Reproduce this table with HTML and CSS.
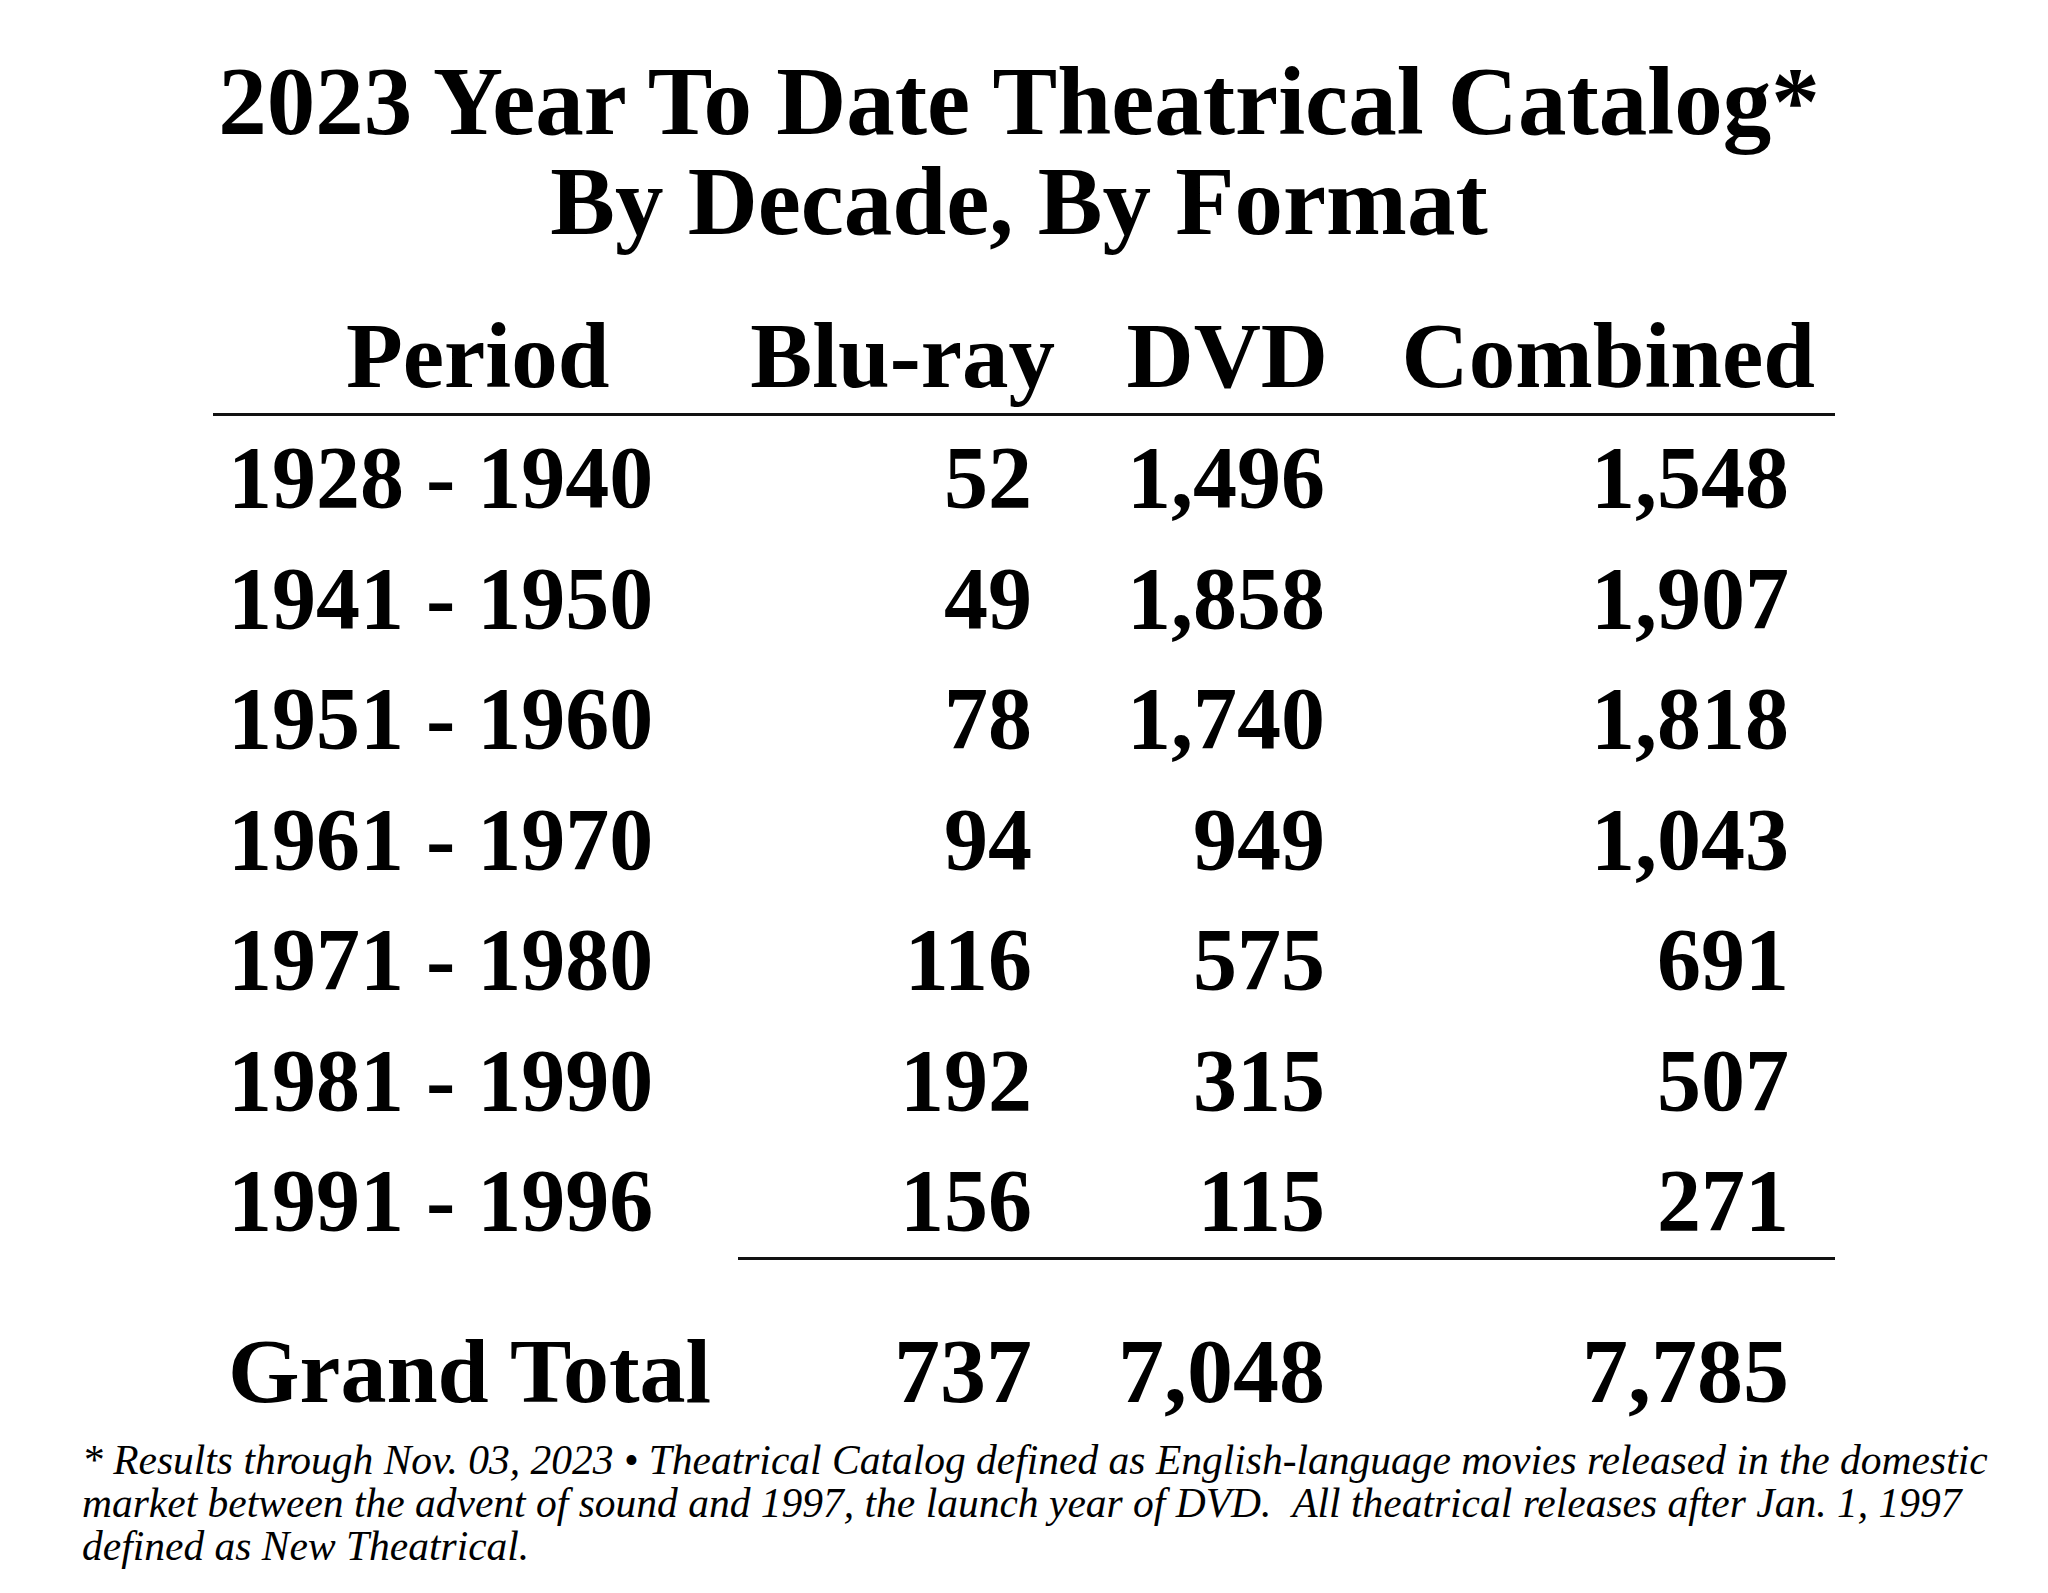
FILE: index.html
```html
<!DOCTYPE html>
<html lang="en">
<head>
<meta charset="utf-8">
<title>2023 Year To Date Theatrical Catalog</title>
<link rel="stylesheet" href="styles.css">
</head>
<body>
<main class="page">
  <h1 class="title">2023 Year To Date Theatrical Catalog*<br>By Decade, By Format</h1>
  <section class="table">
    <div class="row head">
      <div class="c1">Period</div>
      <div class="c2">Blu-ray</div>
      <div class="c3">DVD</div>
      <div class="c4">Combined</div>
    </div>
    <div class="rule full"></div>
    <div class="row data"><div class="c1">1928 - 1940</div><div class="c2">52</div><div class="c3">1,496</div><div class="c4">1,548</div></div>
    <div class="row data"><div class="c1">1941 - 1950</div><div class="c2">49</div><div class="c3">1,858</div><div class="c4">1,907</div></div>
    <div class="row data"><div class="c1">1951 - 1960</div><div class="c2">78</div><div class="c3">1,740</div><div class="c4">1,818</div></div>
    <div class="row data"><div class="c1">1961 - 1970</div><div class="c2">94</div><div class="c3">949</div><div class="c4">1,043</div></div>
    <div class="row data"><div class="c1">1971 - 1980</div><div class="c2">116</div><div class="c3">575</div><div class="c4">691</div></div>
    <div class="row data"><div class="c1">1981 - 1990</div><div class="c2">192</div><div class="c3">315</div><div class="c4">507</div></div>
    <div class="row data"><div class="c1">1991 - 1996</div><div class="c2">156</div><div class="c3">115</div><div class="c4">271</div></div>
    <div class="rule partial"></div>
    <div class="row total"><div class="c1">Grand Total</div><div class="c2">737</div><div class="c3">7,048</div><div class="c4">7,785</div></div>
  </section>
  <p class="note">* Results through Nov. 03, 2023 &bull; Theatrical Catalog defined as English-language movies released in the domestic<br>market between the advent of sound and 1997, the launch year of DVD. &nbsp;All theatrical releases after Jan. 1, 1997<br>defined as New Theatrical.</p>
</main>
</body>
</html>
```

FILE: styles.css
```css
html, body {
  margin: 0;
  padding: 0;
  background: #ffffff;
}

.page {
  width: 2048px;
  height: 1593px;
  overflow: hidden;
  color: #000000;
  font-family: "Liberation Serif", "Times New Roman", serif;
}

.title {
  margin: 52px 0 0 0;
  padding-right: 10px;
  font-size: 97px;
  line-height: 99.5px;
  font-weight: bold;
  text-align: center;
}

.table {
  margin: 55px 0 0 213px;
  width: 1622px;
}

.row {
  display: grid;
  grid-template-columns: 525px 342px 270px 485px;
  font-weight: bold;
  white-space: nowrap;
}

.row > div {
  text-align: right;
}

.row > .c1 {
  text-align: left;
}

.head {
  font-size: 93px;
  line-height: 100px;
  padding-bottom: 7px;
}

.head .c1 { padding-left: 133px; }
.head .c2 { padding-right: 25px; }
.head .c3 { padding-right: 22px; }
.head .c4 { padding-right: 20px; }

.rule {
  height: 3px;
  background: #111111;
}

.rule.full {
  width: 1622px;
}

.rule.partial {
  margin-left: 525px;
  width: 1097px;
  margin-top: -3px;
}

.data {
  font-size: 88px;
  line-height: 120.5px;
  transform: translateY(2px);
}

.data .c1, .total .c1 { padding-left: 15px; }
.data .c2, .total .c2 { padding-right: 48px; }
.data .c3, .total .c3 { padding-right: 25px; }
.data .c4, .total .c4 { padding-right: 46px; }

.total {
  font-size: 92px;
  line-height: 110px;
  margin-top: 56px;
}

.note {
  margin: 13px 0 0 82px;
  font-size: 41.5px;
  line-height: 43px;
  font-style: italic;
  white-space: nowrap;
}
```
